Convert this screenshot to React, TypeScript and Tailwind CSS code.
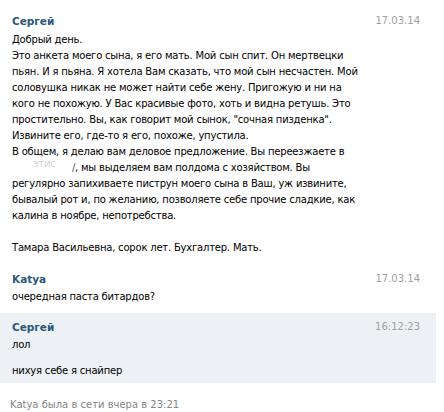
const firstMessage = [
  "Добрый день.",
  "Это анкета моего сына, я его мать. Мой сын спит. Он мертвецки",
  "пьян. И я пьяна. Я хотела Вам сказать, что мой сын несчастен. Мой",
  "соловушка никак не может найти себе жену. Пригожую и ни на",
  "кого не похожую. У Вас красивые фото, хоть и видна ретушь. Это",
  "простительно. Вы, как говорит мой сынок, \"сочная пизденка\".",
  "Извините его, где-то я его, похоже, упустила.",
  "В общем, я делаю вам деловое предложение. Вы переезжаете в",
];

const secondPart = [
  "регулярно запихиваете пиструн моего сына в Ваш, уж извините,",
  "бывалый рот и, по желанию, позволяете себе прочие сладкие, как",
  "калина в ноябре, непотребства.",
];

function Header({ name, date }: { name: string; date: string }) {
  return (
    <div className="flex justify-between items-center h-[16px] pr-[16px]">
      <span className="font-bold text-[#2b587a] text-[10.5px]">{name}</span>
      <span className="text-[#a0a0a0]">{date}</span>
    </div>
  );
}

export default function App() {
  return (
    <div className="w-[444px] h-[412px] bg-white overflow-hidden font-['DejaVu_Sans',sans-serif] text-[10px] leading-[16px] text-black">
      <div className="w-[436px] pl-[12px] pt-[13px]">
        <Header name="Сергей" date="17.03.14" />
        <div className="mt-[3px] whitespace-nowrap tracking-[-0.2px]">
          {firstMessage.map((line) => (
            <div key={line}>{line}</div>
          ))}
          <div>
            <span className="inline-block w-[63px] relative align-top">
              <span className="absolute left-[21px] -top-[4px] text-[#d4d4d4]">этис</span>
              <span className="absolute left-[60px] text-[#555]">/</span>
            </span>
            <span>, мы выделяем вам полдома с хозяйством. Вы</span>
          </div>
          {secondPart.map((line) => (
            <div key={line}>{line}</div>
          ))}
          <div className="h-[16px]" />
          <div>Тамара Васильевна, сорок лет. Бухгалтер. Мать.</div>
        </div>
      </div>

      <div className="w-[436px] pl-[12px] mt-[15px]">
        <Header name="Katya" date="17.03.14" />
        <div className="mt-[2px] tracking-[-0.2px]">очередная паста битардов?</div>
      </div>

      <div className="w-[436px] pl-[12px] mt-[8px] pt-[6px] pb-[4px] bg-[#edf1f5]">
        <Header name="Сергей" date="16:12:23" />
        <div className="mt-[2px] tracking-[-0.2px]">лол</div>
        <div className="mt-[10px] tracking-[-0.2px]">нихуя себе я снайпер</div>
      </div>

      <div className="pl-[10px] mt-[14px] text-[#858585]">Katya была в сети вчера в 23:21</div>
    </div>
  );
}
